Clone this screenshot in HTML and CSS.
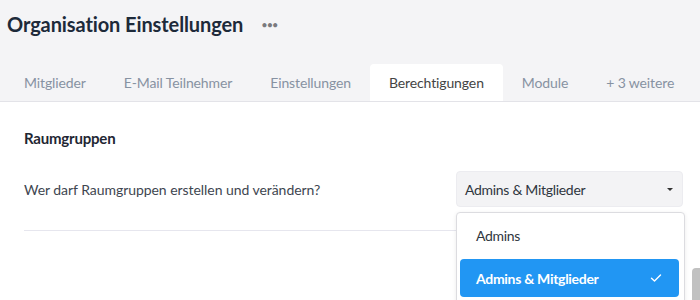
FILE: index.html
```html
<!DOCTYPE html>
<html lang="de">
<head>
<meta charset="utf-8">
<link rel="stylesheet" href="styles.css">
</head>
<body>
<div class="page">
  <header class="header">
    <div class="title-row">
      <h1 class="title">Organisation Einstellungen</h1>
      <span class="more">&bull;&bull;&bull;</span>
    </div>
    <nav class="tabs">
      <span class="tab">Mitglieder</span>
      <span class="tab">E-Mail Teilnehmer</span>
      <span class="tab">Einstellungen</span>
      <span class="tab active">Berechtigungen</span>
      <span class="tab">Module</span>
      <span class="tab">+ 3 weitere</span>
    </nav>
  </header>
  <main class="content">
    <h2 class="section-title">Raumgruppen</h2>
    <div class="setting">
      <span class="label">Wer darf Raumgruppen erstellen und verändern?</span>
      <div class="select-wrap">
        <div class="select">
          <span>Admins &amp; Mitglieder</span>
          <span class="caret"></span>
        </div>
        <ul class="menu">
          <li class="option">Admins</li>
          <li class="option selected">Admins &amp; Mitglieder
            <svg class="check" width="12" height="10" viewBox="0 0 12 10"><path d="M1.5 5.2 L4.5 8 L10.5 2" fill="none" stroke="#fff" stroke-width="1.4" stroke-linecap="round" stroke-linejoin="round"/></svg>
          </li>
        </ul>
      </div>
    </div>
    <div class="divider"></div>
  </main>
  <div class="scroll-thumb"></div>
</div>
</body>
</html>
```
FILE: styles.css
```css
* { box-sizing: border-box; }
html, body { margin: 0; padding: 0; }
body {
  font-family: "Source Sans Pro", Lato, "Noto Sans", sans-serif;
  background: #fff;
  width: 700px;
  height: 300px;
  overflow: hidden;
}
.page { position: relative; height: 300px; overflow: hidden; }
.header {
  background: #f4f4f6;
  border-bottom: 1px solid #e3e3e8;
}
.title-row {
  display: flex;
  align-items: center;
  height: 64px;
  padding: 0 0 16px 7px;
}
.title {
  margin: 0;
  font-size: 20px;
  font-weight: 700;
  color: #1d2a3a;
  letter-spacing: -0.1px;
}
.more {
  margin-left: 18px;
  font-size: 11px;
  color: #7a7a7e;
  letter-spacing: -1px;
}
.tabs {
  display: flex;
  padding-left: 5px;
  height: 37px;
}
.tab {
  display: flex;
  align-items: center;
  flex-shrink: 0;
  white-space: nowrap;
  padding: 0 19px 1px;
  font-size: 14px;
  letter-spacing: -0.12px;
  color: #8792a2;
  border-radius: 4px 4px 0 0;
}
.tab.active {
  background: #fff;
  color: #444;
}
.content {
  padding: 0 17px 0 24px;
}
.section-title {
  margin: 0;
  padding-top: 27px;
  font-size: 15px;
  font-weight: 700;
  letter-spacing: -0.2px;
  color: #1f2733;
  line-height: 18px;
}
.setting {
  display: flex;
  align-items: center;
  justify-content: space-between;
  margin-top: 24px;
}
.label {
  font-size: 14px;
  letter-spacing: -0.05px;
  color: #3e4650;
}
.select-wrap {
  position: relative;
  width: 227px;
}
.select {
  display: flex;
  align-items: center;
  justify-content: space-between;
  height: 36px;
  padding: 0 9px 0 8px;
  background: #f3f3f5;
  border: 1px solid #ececf0;
  border-radius: 4px;
  font-size: 14px;
  letter-spacing: -0.3px;
  color: #2f3640;
}
.caret {
  width: 0; height: 0;
  border-left: 3px solid transparent;
  border-right: 3px solid transparent;
  border-top: 3px solid #333;
}
.menu {
  position: absolute;
  left: 0;
  top: 41px;
  width: 229px;
  height: 120px;
  margin: 0;
  padding: 3px 5px 4px 3px;
  list-style: none;
  background: #fff;
  border: 1px solid #dcdce0;
  border-radius: 4px;
  box-shadow: 0 1px 4px rgba(0,0,0,0.08);
  z-index: 2;
}
.option {
  display: flex;
  align-items: center;
  justify-content: space-between;
  height: 38px;
  padding: 0 15px 0 16px;
  font-size: 14px;
  letter-spacing: -0.3px;
  color: #2f3640;
  margin-bottom: 5px;
}
.option.selected {
  background: #2196f3;
  color: #fff;
  font-weight: 700;
  border-radius: 4px;
}
.check { margin-right: 2px; }
.divider {
  height: 1px;
  background: #e6e6ee;
  margin-top: 23px;
}
.scroll-thumb {
  position: absolute;
  right: 0;
  top: 268px;
  width: 8px;
  height: 60px;
  background: #c1c1c1;
  border-radius: 4px 0 0 0;
}
```
